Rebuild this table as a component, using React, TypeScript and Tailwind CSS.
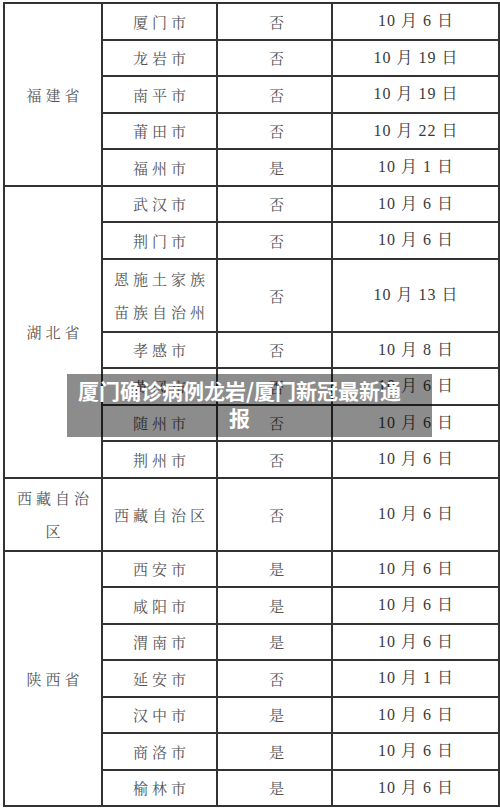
import React from "react";

type Row = {
  province?: { name: React.ReactNode; span: number };
  city: React.ReactNode;
  units?: number;
  local: string;
  day: number;
};

const rows: Row[] = [
  { province: { name: "福建省", span: 5 }, city: "厦门市", local: "否", day: 6 },
  { city: "龙岩市", local: "否", day: 19 },
  { city: "南平市", local: "否", day: 19 },
  { city: "莆田市", local: "否", day: 22 },
  { city: "福州市", local: "是", day: 1 },
  { province: { name: "湖北省", span: 7 }, city: "武汉市", local: "否", day: 6 },
  { city: "荆门市", local: "否", day: 6 },
  { city: <>恩施土家族<br />苗族自治州</>, units: 2, local: "否", day: 13 },
  { city: "孝感市", local: "否", day: 8 },
  { city: "黄冈市", local: "否", day: 6 },
  { city: "随州市", local: "否", day: 6 },
  { city: "荆州市", local: "否", day: 6 },
  { province: { name: <>西藏自治<br />区</>, span: 1 }, city: "西藏自治区", units: 2, local: "否", day: 6 },
  { province: { name: "陕西省", span: 7 }, city: "西安市", local: "是", day: 6 },
  { city: "咸阳市", local: "是", day: 6 },
  { city: "渭南市", local: "是", day: 6 },
  { city: "延安市", local: "否", day: 1 },
  { city: "汉中市", local: "是", day: 6 },
  { city: "商洛市", local: "是", day: 6 },
  { city: "榆林市", local: "是", day: 6 },
];

const cell = "border-2 border-[#333] text-center align-middle p-0";
const cjk =
  "font-['Noto_Serif_CJK_SC','Noto_Sans_CJK_SC',serif] text-[15px] leading-[33px] tracking-[4px] pl-[4px] text-[#555]";
const date =
  "font-['Liberation_Serif','Noto_Serif_CJK_SC','Noto_Sans_CJK_SC',serif] text-[16px] tracking-[1px] pl-[1px] text-[#3a3a3a]";

export default function App() {
  return (
    <div className="relative w-[500px] h-[811px] bg-white overflow-hidden">
      <div className="pt-[2px] pl-[3px]">
        <table className="table-fixed border-collapse w-[495px]">
          <colgroup>
            <col className="w-[98px]" />
            <col className="w-[115px]" />
            <col className="w-[115px]" />
            <col className="w-[167px]" />
          </colgroup>
          <tbody>
            {rows.map((r, i) => (
              <tr key={i} className={r.units === 2 ? "h-[73px]" : "h-[36.5px]"}>
                {r.province && (
                  <td rowSpan={r.province.span} className={`${cell} ${cjk}`}>
                    {r.province.name}
                  </td>
                )}
                <td className={`${cell} ${cjk}`}>{r.city}</td>
                <td className={`${cell} ${cjk} tracking-normal pl-0`}>{r.local}</td>
                <td className={`${cell} ${date}`}>
                  10 月 {r.day} 日
                </td>
              </tr>
            ))}
          </tbody>
        </table>
      </div>

      {/* caption over the table */}
      <div className="absolute left-[67px] top-[374px] w-[365px] h-[63px] bg-black/45 pl-[6px] pr-[26px] pt-[3px] text-center">
        <p className="font-['Noto_Sans_CJK_SC',sans-serif] font-bold text-[21px] leading-[27px] text-white">
          厦门确诊病例龙岩/厦门新冠最新通报
        </p>
      </div>
    </div>
  );
}
